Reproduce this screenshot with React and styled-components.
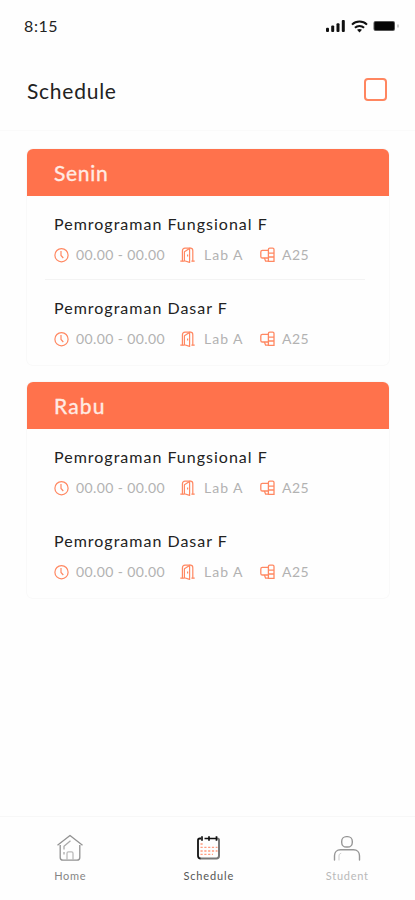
import React from 'react'
import styled, { createGlobalStyle } from 'styled-components';

const GlobalStyle = createGlobalStyle`
  * {
    box-sizing: border-box;
  }
  body {
    margin: 0;
    background: #fefefe;
    font-family: Lato, 'Open Sans', sans-serif;
  }
`;

const days = [
  {
    name: 'Senin',
    spacing: '0.7px',
    divided: true,
    lessons: [
      { title: 'Pemrograman Fungsional F', time: '00.00 - 00.00', room: 'Lab A', group: 'A25' },
      { title: 'Pemrograman Dasar F', time: '00.00 - 00.00', room: 'Lab A', group: 'A25' },
    ],
  },
  {
    name: 'Rabu',
    spacing: '1.2px',
    divided: false,
    lessons: [
      { title: 'Pemrograman Fungsional F', time: '00.00 - 00.00', room: 'Lab A', group: 'A25' },
      { title: 'Pemrograman Dasar F', time: '00.00 - 00.00', room: 'Lab A', group: 'A25' },
    ],
  },
];

const SignalIcon = () => (
  <svg width='20' height='14' viewBox='0 0 20 14' fill='#111'>
    <rect x='0' y='8.8' width='3' height='4.2' rx='1' />
    <rect x='5.2' y='6.6' width='3' height='6.4' rx='1' />
    <rect x='10.5' y='4.2' width='3' height='8.8' rx='1' />
    <rect x='15.8' y='1' width='3' height='12' rx='1' />
  </svg>
);

const WifiIcon = () => (
  <svg width='17' height='13' viewBox='0 0 17 13' fill='none' stroke='#111' strokeWidth='2'>
    <path d='M1 4.6C5.2 0.6 11.8 0.6 16 4.6' />
    <path d='M3.9 7.7c2.6-2.4 6.6-2.4 9.2 0' />
    <path d='M6 9.8c1.4-1.2 3.6-1.2 5 0L8.5 12.4z' fill='#111' stroke='none' />
  </svg>
);

const BatteryIcon = () => (
  <svg width='27' height='12' viewBox='0 0 27 12'>
    <rect x='0.5' y='1' width='21.5' height='10' rx='2' fill='#555' />
    <rect x='1.5' y='2' width='19.5' height='8' rx='1' fill='#050505' />
    <path d='M25 4.5v3' stroke='#aaa' strokeWidth='1.2' />
  </svg>
);

const ClockIcon = () => (
  <svg width='15' height='15' viewBox='0 0 15 15' fill='none' stroke='#ff8862' strokeWidth='1.2'>
    <circle cx='7.5' cy='7.2' r='6.6' />
    <path d='M7 3v4.4l2.3 2.6' />
  </svg>
);

const DoorIcon = () => (
  <svg width='15' height='16' viewBox='0 0 15 16' fill='none' stroke='#ff8862' strokeWidth='1.2'>
    <path d='M0.3 14.2h4.2M11.4 14.2h3.3' />
    <path d='M2.4 14.2V4c0-1.8 1-2.8 2.6-2.8h5.4c1.6 0 2.4 1 2.4 2.6v10.4' />
    <path d='M4.4 14.2V4.8l5.2-3.4v14l-5.2-1.6' />
    <path d='M7.6 7.4v2' />
  </svg>
);

const GroupIcon = () => (
  <svg width='15' height='16' viewBox='0 0 15 16' fill='none' stroke='#ff8862' strokeWidth='1.3'>
    <path d='M8.4 3.4H2.4C1.4 3.4 0.8 4 0.8 5v4.4c0 1 0.6 1.6 1.6 1.6h6' />
    <path d='M8.4 14.4V2.6c0-0.9 0.5-1.4 1.4-1.4h2.8c0.9 0 1.4 0.5 1.4 1.4v11.8z' />
    <path d='M8.4 6.2H14M8.4 10H14M4.4 11l1.2 3.2h2.8' />
  </svg>
);

const HomeIcon = () => (
  <svg width='28' height='28' viewBox='0 0 28 28' fill='none' stroke='#929292' strokeWidth='1.3' strokeLinejoin='round'>
    <path d='M1.5 11.3L14 1.5l12.5 9.8' />
    <path d='M4.2 11v12.4c0 1.8 1 2.8 2.8 2.8h14c1.8 0 2.8-1 2.8-2.8V11' />
    <path d='M11 26v-6.8c0-0.9 0.5-1.4 1.4-1.4h3.2c0.9 0 1.4 0.5 1.4 1.4V26' stroke='#bbb' />
    <path d='M8 15.4v-3.2l6.5-5.4M8 18v2.5' stroke='#aaa' />
  </svg>
);

const CalendarIcon = () => (
  <svg width='28' height='28' viewBox='0 0 28 28' fill='none'>
    <path d='M6 4.5H4.8c-1.1 0-1.8 0.7-1.8 1.8v15.4c0 1.8 0.9 2.8 2.8 2.8' stroke='#111' strokeWidth='1.8' />
    <path d='M5.8 24.5h15.6c1.6 0 2.6-1 2.6-2.8V6.3c0-1.1-0.7-1.8-1.8-1.8' stroke='#777' strokeWidth='2' />
    <path d='M9.5 4.5h13M7 2.2v4.6M14 2.2v4.6M21.5 2.2v4.6' stroke='#111' strokeWidth='1.7' />
    <path d='M5.5 10h3M5.5 13.4h17M5.5 17h17M5.5 20.4H18' stroke='#ff9c80' strokeWidth='1.4' strokeDasharray='2.2 1.6' />
  </svg>
);

const StudentIcon = () => (
  <svg width='28' height='28' viewBox='0 0 28 28' fill='none' stroke='#969696' strokeWidth='1.4' strokeLinecap='round'>
    <rect x='8.7' y='2.6' width='10.6' height='10.4' rx='4.6' />
    <path d='M1.5 26v-4.2c0-3.6 2.4-6 6-6h13c3.6 0 6 2.4 6 6V26' />
    <path d='M6 26v-4c0-1.6 0.6-2.3 1.8-2.6' stroke='#ccc' strokeWidth='1' />
  </svg>
);

const Lesson = ({ lesson, divided }) => {
  const { title, time, room, group } = lesson;
  return <LessonRow $divided={divided}>
    <LessonTitle>{title}</LessonTitle>
    <Meta>
      <MetaItem $width='126px'>
        <ClockIcon />
        <MetaText $spacing='0.38px'>{time}</MetaText>
      </MetaItem>
      <MetaItem $width='80px' $gap='9px'>
        <DoorIcon />
        <MetaText $spacing='1px'>{room}</MetaText>
      </MetaItem>
      <MetaItem>
        <GroupIcon />
        <MetaText $spacing='0.5px'>{group}</MetaText>
      </MetaItem>
    </Meta>
  </LessonRow>
};

const App = () => {
  return <Screen>
    <GlobalStyle />
    <StatusBar>
      <Clock>8:15</Clock>
      <StatusIcons>
        <SignalIcon />
        <WifiIcon />
        <BatteryIcon />
      </StatusIcons>
    </StatusBar>
    <Header>
      <PageTitle>Schedule</PageTitle>
      <CheckButton aria-label='Select' />
    </Header>
    <DayList>
      {days.map((day) => (
        <DayCard key={day.name}>
          <DayHeader $spacing={day.spacing}>{day.name}</DayHeader>
          {day.lessons.map((lesson, i) => (
            <Lesson key={lesson.title} lesson={lesson} divided={day.divided && i === 0} />
          ))}
        </DayCard>
      ))}
    </DayList>
    {/* bottom navigation */}
    <TabBar>
      <Tab $color='#858585'>
        <HomeIcon />
        <TabLabel $spacing='0.7px'>Home</TabLabel>
      </Tab>
      <Tab $color='#555'>
        <CalendarIcon />
        <TabLabel $spacing='0.85px'>Schedule</TabLabel>
      </Tab>
      <Tab $color='#b9b9b9'>
        <StudentIcon />
        <TabLabel $spacing='0.75px'>Student</TabLabel>
      </Tab>
    </TabBar>
  </Screen>
};

const Screen = styled.div`
  display: flex;
  flex-direction: column;
  width: 415px;
  height: 900px;
  overflow: hidden;
  background: #fefefe;
`;

const StatusBar = styled.div`
  display: flex;
  align-items: center;
  justify-content: space-between;
  height: 52px;
  padding: 0 15px 0 24px;
`;

const Clock = styled.span`
  padding-bottom: 2px;
  font-size: 16px;
  letter-spacing: 0.6px;
  color: #222;
`;

const StatusIcons = styled.div`
  display: flex;
  align-items: center;
  gap: 5px;
`;

const Header = styled.header`
  display: flex;
  align-items: center;
  justify-content: space-between;
  height: 79px;
  padding: 0 28px 2px 27px;
  border-bottom: 1px solid #fafafa;
`;

const PageTitle = styled.h1`
  margin: 0;
  font-size: 21px;
  font-weight: 400;
  letter-spacing: 0.75px;
  color: #222;
`;

const CheckButton = styled.button`
  width: 23px;
  height: 23px;
  margin-bottom: 1px;
  padding: 0;
  border: 2px solid #ff8660;
  border-radius: 4px;
  background: #fff;
`;

const DayList = styled.main`
  flex: 1;
  display: flex;
  flex-direction: column;
  gap: 17px;
  padding: 18px 26px 0 27px;
`;

const DayCard = styled.section`
  height: 216px;
  border-radius: 6px;
  box-shadow: 0 0 0 1px #f9f9f9;
  background: #fefefe;
`;

const DayHeader = styled.h2`
  height: 47px;
  margin: 0;
  padding-left: 27px;
  border-radius: 6px 6px 0 0;
  background: #ff724c;
  color: #ffebe3;
  font-size: 21px;
  font-weight: 400;
  line-height: 47px;
  letter-spacing: ${({ $spacing }) => $spacing};
  -webkit-text-stroke: 0.35px #ffebe3;
`;

const LessonRow = styled.article`
  height: 84px;
  margin: 0 24px 0 18px;
  padding: 18px 0 0 9px;
  border-bottom: 1px solid ${({ $divided }) => ($divided ? '#f3f3f3' : 'transparent')};
`;

const LessonTitle = styled.h3`
  margin: 0;
  font-size: 16px;
  font-weight: 400;
  line-height: 20px;
  letter-spacing: 1px;
  color: #222;
`;

const Meta = styled.div`
  display: flex;
  margin-top: 11px;
`;

const MetaItem = styled.div`
  display: flex;
  align-items: center;
  gap: ${({ $gap }) => $gap || '7px'};
  width: ${({ $width }) => $width || 'auto'};
  height: 20px;
`;

const MetaText = styled.span`
  font-size: 14px;
  line-height: 20px;
  white-space: nowrap;
  letter-spacing: ${({ $spacing }) => $spacing};
  color: #b2b2b2;
`;

const TabBar = styled.nav`
  display: grid;
  grid-template-columns: repeat(3, 138.5px);
  height: 84px;
  padding-left: 1px;
  border-top: 1px solid #f7f7f7;
`;

const Tab = styled.a`
  display: flex;
  flex-direction: column;
  align-items: center;
  padding-top: 17px;
  color: ${({ $color }) => $color};
`;

const TabLabel = styled.span`
  margin-top: 7px;
  font-size: 11px;
  line-height: 14px;
  letter-spacing: ${({ $spacing }) => $spacing};
`;

export default App;
